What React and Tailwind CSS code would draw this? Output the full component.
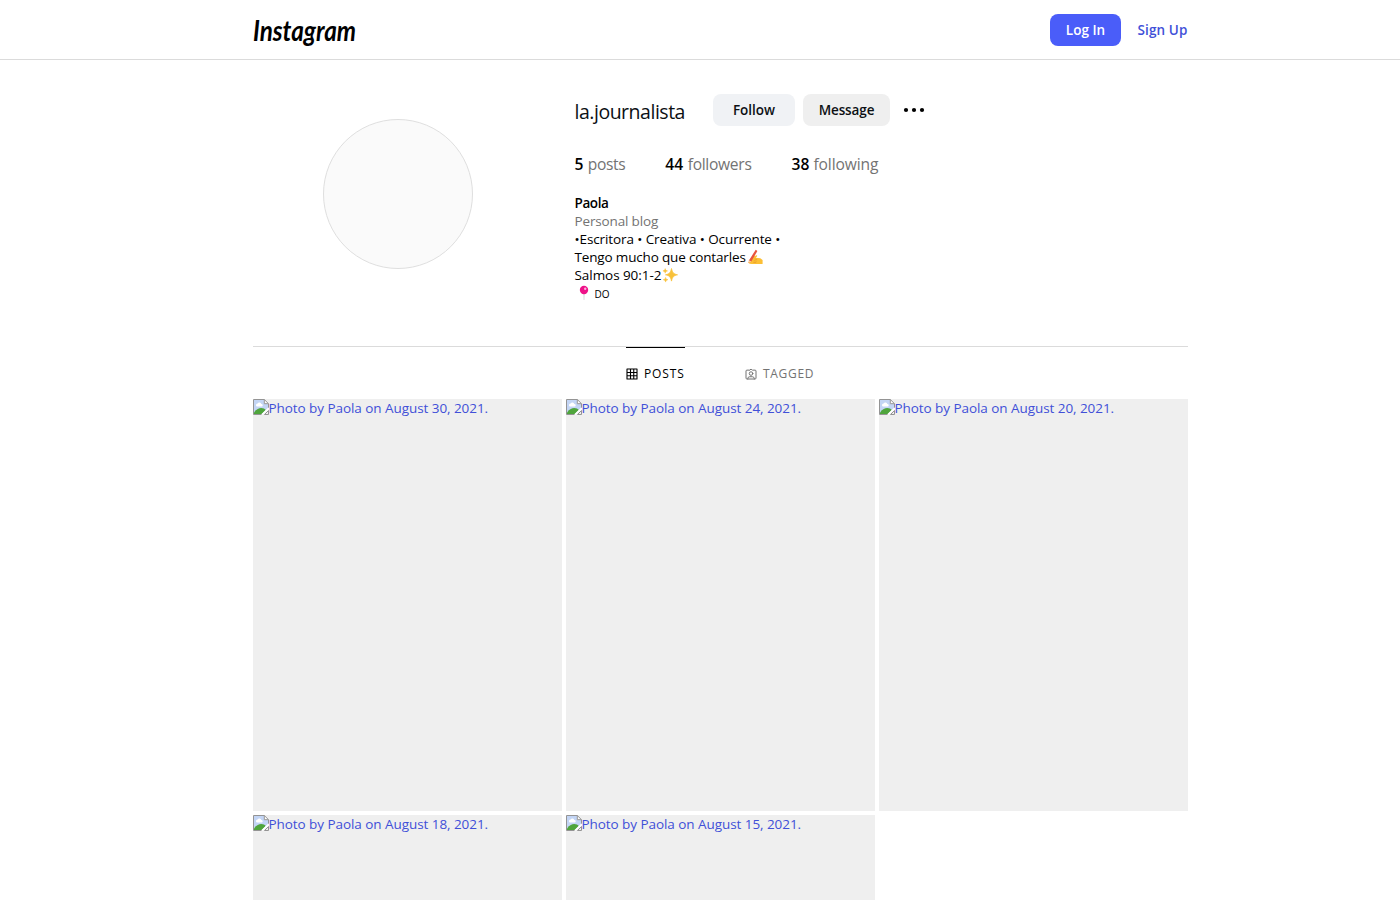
const POSTS = ['August 30, 2021', 'August 24, 2021', 'August 20, 2021', 'August 18, 2021', 'August 15, 2021'];

function Wordmark() {
  return (
    <svg className="h-[34px] w-[106px] overflow-visible" viewBox="0 0 106 34" role="img" aria-label="Instagram">
      <text x="0" y="28" textLength="103" lengthAdjust="spacingAndGlyphs" className="fill-black font-['Lato',sans-serif] text-[29px] font-bold italic">
        Instagram
      </text>
    </svg>
  );
}

function MoreIcon() {
  return (
    <svg className="h-6 w-6" viewBox="0 0 24 24" fill="#000">
      <circle cx="4" cy="12" r="2.1" />
      <circle cx="12" cy="12" r="2.1" />
      <circle cx="20" cy="12" r="2.1" />
    </svg>
  );
}

function GridIcon() {
  return (
    <svg className="h-3 w-3" viewBox="0 0 24 24" fill="none" stroke="currentColor" strokeWidth="2.2" strokeLinejoin="round">
      <rect x="2" y="2" width="20" height="20" />
      <path d="M9 2v20M15.500 2v20M22 9H2M22 15.500H2" />
    </svg>
  );
}

function TaggedIcon() {
  return (
    <svg className="h-3 w-3" viewBox="0 0 24 24" fill="none" stroke="currentColor" strokeWidth="2" strokeLinecap="round" strokeLinejoin="round">
      <path d="M10.201 3.797 12 1.997l1.799 1.8a1.59 1.59 0 0 0 1.124.465h5.259A1.818 1.818 0 0 1 22 6.08v14.104a1.818 1.818 0 0 1-1.818 1.818H3.818A1.818 1.818 0 0 1 2 20.184V6.08a1.818 1.818 0 0 1 1.818-1.818h5.26a1.59 1.59 0 0 0 1.123-.465Z" />
      <path d="M18.598 22.002V21.4a3.949 3.949 0 0 0-3.948-3.949H9.495A3.949 3.949 0 0 0 5.546 21.4v.603" />
      <circle cx="12.072" cy="11.075" r="3.556" />
    </svg>
  );
}

function BrokenImageIcon() {
  return (
    <svg className="h-4 w-4 shrink-0" viewBox="0 0 16 16">
      <path d="M.5.5h10.800l4.200 4.200v5.200L9 15.500H.5Z" fill="#fff" />
      <path d="M1 1h10v4h4v5l-5 5H1Z" fill="#c3d5f5" />
      <path d="M3 6.200a1.700 1.700 0 0 1 1.600-1.800 2 2 0 0 1 3.700.6 1.300 1.300 0 0 1 .6 2.500H4.200A1.400 1.400 0 0 1 3 6.200Z" fill="#fff" />
      <path d="M1 15v-1.600C3.600 10.200 6 9 8.200 9c2 0 3.700.8 4.600 2L8.800 15Z" fill="#4fa53c" />
      <path d="M15.500 8.300 8 15.500h2.200l5.300-4.600Z" fill="#fff" />
      <path d="M8.500 15.500H.5V.5h10.800l4.200 4.200v4M11.300.5v4.200h4.200M11.500 15.500h4v-4Z" fill="none" stroke="#949494" />
    </svg>
  );
}

function WritingHandIcon() {
  return (
    <svg className="h-4 w-4" viewBox="0 0 16 16">
      <path d="M1.200 13.800 3 10l3.800-2.700 2.300-.9c1-.3 1.500.6.8 1.200L8.700 8.700l4.600.6 2.300 1.700v4H5.500c-1.700.2-3.200-.2-4.300-1.200Z" fill="#fcbf35" />
      <path d="m7.500 9.900 2.700.7M6.800 11.700l3 .5M6.200 13.300l3 .3" stroke="#e79b25" strokeWidth=".7" />
      <path d="M8.700.8 10.400 2 4.300 12.500l-2.600 1.600.4-2.900Z" fill="#e8543c" />
      <path d="m2.100 11.200 2.200 1.300-2.600 1.600Z" fill="#f6d5a6" />
    </svg>
  );
}

function SparklesIcon() {
  return (
    <svg className="h-4 w-4" viewBox="0 0 16 16" fill="#f8c13a">
      <path d="M9.500 1.500c.9 4.200 2.100 5.500 6 6.300-3.900.8-5.100 2.100-6 6.300-.9-4.200-2.100-5.500-6-6.300 3.900-.8 5.100-2.100 6-6.300Z" stroke="#f8c13a" strokeWidth=".8" />
      <path d="M3.200 1.600c.3 1.500.8 2 2.300 2.300-1.500.3-2 .8-2.300 2.300-.3-1.500-.8-2-2.300-2.300 1.500-.3 2-.8 2.300-2.300ZM3.600 10.400c.3 1.500.9 2 2.400 2.300-1.500.3-2.100.9-2.400 2.400-.3-1.500-.9-2.100-2.400-2.400 1.500-.3 2.100-.8 2.400-2.300Z" stroke="#f8c13a" strokeWidth=".5" />
    </svg>
  );
}

function PinIcon() {
  return (
    <svg className="h-4 w-4" viewBox="0 0 16 16">
      <path d="M7.500 8h1l-.2 7h-.6Z" fill="#c9ccd1" />
      <circle cx="8" cy="5" r="4.200" fill="#ee1289" />
      <circle cx="9.200" cy="3.700" r="1.200" fill="#ffb3dc" />
    </svg>
  );
}

function Stat({ value, label, labelClass }) {
  return (
    <li className="flex gap-1">
      <span className="font-semibold text-black">{value}</span>
      <span className={labelClass}>{label}</span>
    </li>
  );
}

export default function App() {
  return (
    <div className="h-[900px] w-[1400px] overflow-hidden bg-white font-['Open_Sans','Noto_Sans',sans-serif] text-[13.5px] leading-[18px] text-[#0c1014]">
      <header className="h-[60px] border-b border-[#dbdbdb]">
        <div className="ml-[253px] flex h-[59px] w-[935px] items-center">
          <Wordmark />
          <button className="ml-auto h-8 w-[71px] rounded-lg bg-[#4a5df9] font-semibold text-white">Log In</button>
          <button className="ml-4 h-8 w-[51px] font-semibold tracking-[0.12px] whitespace-nowrap text-[#4150d8]">Sign Up</button>
        </div>
      </header>

      <main className="ml-[253px] w-[935px]">
        <section className="flex h-[286px]">
          <div className="w-[321.5px] pt-[59px] pl-[70px]">
            <div className="h-[150px] w-[150px] rounded-full border border-[#dfdfdf] bg-[#fafafa]" />
          </div>
          <div className="pt-[34px]">
            <div className="flex h-8 items-center">
              <h1 className="w-[138.5px] pt-[3px] text-[19.5px] leading-6 tracking-[-0.48px]">la.journalista</h1>
              <button className="h-8 w-[82px] rounded-lg bg-[#f0f2f5] font-semibold">Follow</button>
              <button className="ml-2 h-8 w-[87px] rounded-lg bg-[#efefef] font-semibold tracking-[-0.12px]">Message</button>
              <button className="ml-3 h-6 w-6"><MoreIcon /></button>
            </div>
            <ul className="mt-[29px] flex h-[18px] gap-10 text-[15.6px] leading-[19px] text-[#737373]">
              <Stat value="5" label="posts" labelClass="ml-[0.4px] tracking-[-0.36px]" />
              <Stat value="44" label="followers" labelClass="ml-[0.5px] tracking-[-0.3px]" />
              <Stat value="38" label="following" labelClass="tracking-[-0.1px]" />
            </ul>
            <div className="mt-[21px] text-black">
              <p className="font-semibold tracking-[-0.4px]">Paola</p>
              <p className="tracking-[-0.15px] text-[#737373]">Personal blog</p>
              <p className="tracking-[-0.1px]">•Escritora • Creativa • Ocurrente •</p>
              <p className="flex items-center gap-px tracking-[-0.16px]">Tengo mucho que contarles<WritingHandIcon /></p>
              <p className="flex items-center gap-px tracking-[-0.06px]">Salmos 90:1-2<SparklesIcon /></p>
              <p className="flex h-[18px] items-center pl-px"><PinIcon /><span className="pt-px pl-[3px] text-[10px]">DO</span></p>
            </div>
          </div>
        </section>

        <nav className="flex h-[53px] justify-center gap-[60px] border-t border-[#dbdbdb] text-xs font-medium">
          <a className="flex h-full w-[59px] items-center gap-1.5 border-t border-black text-black">
            <GridIcon /><span className="tracking-[0.9px]">POSTS</span>
          </a>
          <a className="flex h-full w-[70px] items-center gap-1.5 border-t border-transparent text-[#737373]">
            <TaggedIcon /><span className="tracking-[0.7px]">TAGGED</span>
          </a>
        </nav>

        <div className="grid grid-cols-3 gap-1">
          {POSTS.map((date) => (
            <a key={date} className="flex h-[412px] items-start bg-[#efefef] tracking-[-0.06px] text-[#4150d8]">
              <BrokenImageIcon />
              <span className="-ml-[0.5px]">Photo by Paola on {date}.</span>
            </a>
          ))}
        </div>
      </main>
    </div>
  );
}
